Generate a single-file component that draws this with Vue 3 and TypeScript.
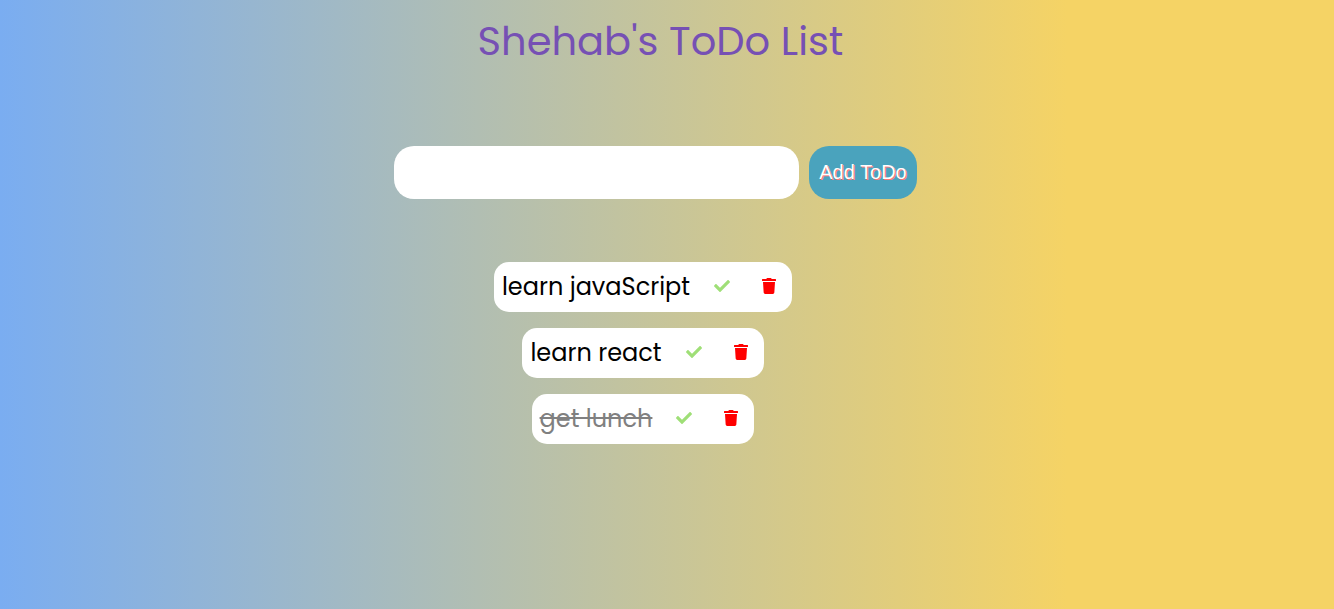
<script setup lang="ts">
import { ref } from 'vue'

interface Todo {
  id: number
  text: string
  done: boolean
}

const draft = ref('')
const todos = ref<Todo[]>([
  { id: 1, text: 'learn javaScript', done: false },
  { id: 2, text: 'learn react', done: false },
  { id: 3, text: 'get lunch', done: true },
])

function addTodo(): void {
  const text = draft.value.trim()
  if (!text) return
  todos.value.push({ id: Date.now(), text, done: false })
  draft.value = ''
}

function removeTodo(id: number): void {
  todos.value = todos.value.filter((todo) => todo.id !== id)
}
</script>

<template>
  <main class="page">
    <h1 class="title">Shehab's ToDo List</h1>
    <form class="entry" @submit.prevent="addTodo">
      <input v-model="draft" class="field" type="text" aria-label="New todo" />
      <button class="add" type="submit">Add ToDo</button>
    </form>
    <ul class="list">
      <li v-for="todo in todos" :key="todo.id" class="item">
        <span class="text" :class="{ done: todo.done }">{{ todo.text }}</span>
        <button class="icon check" type="button" aria-label="Toggle done" @click="todo.done = !todo.done">
          <svg width="16" height="16" viewBox="0 0 512 512" aria-hidden="true">
            <path fill="currentColor" d="M173.898 439.404l-166.400-166.400c-9.997-9.997-9.997-26.206 0-36.204l36.203-36.204c9.997-9.998 26.207-9.998 36.204 0L192 312.690 432.095 72.596c9.997-9.997 26.207-9.997 36.204 0l36.203 36.204c9.997 9.997 9.997 26.206 0 36.204l-294.400 294.401c-9.998 9.997-26.207 9.997-36.204-.001z" />
          </svg>
        </button>
        <button class="icon trash" type="button" aria-label="Delete" @click="removeTodo(todo.id)">
          <svg width="14" height="16" viewBox="0 0 448 512" aria-hidden="true">
            <path fill="currentColor" d="M432 32H312l-9.400-18.700A24 24 0 0 0 281.100 0H166.800a23.720 23.720 0 0 0-21.400 13.300L136 32H16A16 16 0 0 0 0 48v32a16 16 0 0 0 16 16h416a16 16 0 0 0 16-16V48a16 16 0 0 0-16-16zM53.200 467a48 48 0 0 0 47.900 45h245.800a48 48 0 0 0 47.900-45L416 128H32z" />
          </svg>
        </button>
      </li>
    </ul>
  </main>
</template>

<style>
body {
  margin: 0;
}
</style>

<style scoped>
.page {
  box-sizing: border-box;
  min-height: 100vh;
  padding: 11px 0 24px;
  background: linear-gradient(to right, #7aadf1, #f5d365 80%);
  font-family: Poppins, Inter, sans-serif;
}

.title {
  margin: 0 13px 0 0;
  color: #7650b4;
  font-size: 40px;
  font-weight: 400;
  line-height: 60px;
  text-align: center;
}

.entry {
  display: flex;
  justify-content: center;
  gap: 10px;
  margin: 75px 23px 0 0;
}

.field,
.add {
  box-sizing: border-box;
  height: 53px;
  border: 0;
  border-radius: 20px;
  font-size: 20px;
}

.field {
  width: 405px;
  padding: 0 20px;
  background: #fff;
  font-family: inherit;
}

.add {
  padding: 0 10px;
  background: #4aa3bd;
  color: #fff;
  font-family: Arial, "Liberation Sans", sans-serif;
  text-shadow: 1px 1px 0 #f77;
  cursor: pointer;
}

.list {
  display: flex;
  flex-direction: column;
  align-items: center;
  gap: 16px;
  margin: 63px 48px 0 0;
  padding: 0;
  list-style: none;
}

.item {
  display: flex;
  align-items: center;
  height: 50px;
  padding-left: 8px;
  border-radius: 15px;
  background: #fff;
}

.text {
  margin-right: 8px;
  color: #000;
  font-size: 24px;
  line-height: 36px;
}

.done {
  color: #808080;
  text-decoration: line-through;
}

.icon {
  display: flex;
  padding: 0 16px 2px;
  border: 0;
  background: transparent;
  cursor: pointer;
}

.check {
  color: #9fdf77;
}

.trash {
  color: #f00;
}
</style>
